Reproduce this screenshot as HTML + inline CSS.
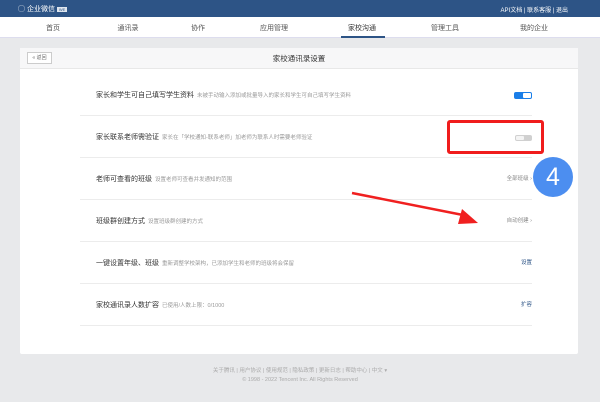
<!DOCTYPE html>
<html><head><meta charset="utf-8"><style>
*{margin:0;padding:0;box-sizing:border-box}
body{width:600px;height:402px;background:#e8e9eb;font-family:"Liberation Sans","Noto Sans CJK SC",sans-serif;position:relative;overflow:hidden}
.top{position:absolute;left:0;top:0;width:600px;height:17px;background:#2d5486;color:#fff;font-size:7px}
.nav{position:absolute;left:0;top:17px;width:600px;height:21px;background:#fff;font-size:7px;color:#555;border-bottom:1px solid #dde}
.nav span{position:absolute;top:6px;transform:translateX(-50%)}
.card{position:absolute;left:20px;top:48px;width:558px;height:306px;background:#fff;border-radius:2px}
.hdr{position:absolute;left:0;top:0;width:558px;height:21px;background:#f7f7f8;border-bottom:1px solid #e8e8e8}
.row{position:absolute;left:60px;width:452px;border-bottom:1px solid #ececec;height:42px}
.t{position:absolute;left:16px;top:16px;font-size:7px;color:#333;white-space:nowrap}
.t small{font-size:5.5px;color:#999;margin-left:3px}
.r{position:absolute;right:0;top:16px;font-size:5.5px;color:#888}
.foot{position:absolute;left:0;width:600px;text-align:center;color:#aaa;font-size:5.5px}
</style></head><body>
<div class="top">
<span style="position:absolute;left:18px;top:4px;font-size:7px">◯ 企业微信 <span style="background:#dfe6ee;color:#2d5486;font-size:4px;padding:0 2px">WE</span></span>
<span style="position:absolute;right:32px;top:5px;font-size:6px">API文档 | 联系客服 | 退出</span>
</div>
<div class="nav">
<span style="left:53px">首页</span><span style="left:128px">通讯录</span><span style="left:198px">协作</span><span style="left:274px">应用管理</span><span style="left:362px;color:#333">家校沟通</span><span style="left:445px">管理工具</span><span style="left:534px">我的企业</span>
<div style="position:absolute;left:341px;top:19px;width:44px;height:2px;background:#2d5486"></div>
</div>
<div class="card">
<div class="hdr">
<div style="position:absolute;left:7px;top:4px;width:25px;height:12px;border:1px solid #ccc;background:#fff;font-size:5px;color:#666;text-align:center;line-height:10px">« 返回</div>
<div style="position:absolute;left:0;width:558px;top:5px;text-align:center;font-size:7.5px;color:#333">家校通讯录设置</div>
</div>
<div class="row" style="top:26px"><div class="t">家长和学生可自己填写学生资料<small>未被手动输入添加或批量导入的家长和学生可自己填写学生资料</small></div>
<div style="position:absolute;right:0;top:18px;width:18px;height:7px;border-radius:2px;background:#1a7ee8"><div style="position:absolute;right:1px;top:1px;width:8px;height:5px;background:#fff;border-radius:1px"></div></div></div>
<div class="row" style="top:68px"><div class="t">家长联系老师需验证<small>家长在「学校通知-联系老师」加老师为联系人时需要老师验证</small></div>
<div style="position:absolute;right:0;top:19px;width:17px;height:6px;border-radius:2px;background:#d0d0d0"><div style="position:absolute;left:1px;top:1px;width:8px;height:4px;background:#f4f4f4;border-radius:1px"></div></div></div>
<div class="row" style="top:110px"><div class="t">老师可查看的班级<small>设置老师可查看并发通知的范围</small></div><div class="r">全部班级 ›</div></div>
<div class="row" style="top:152px"><div class="t">班级群创建方式<small>设置班级群创建的方式</small></div><div class="r">自动创建 ›</div></div>
<div class="row" style="top:194px"><div class="t">一键设置年级、班级<small>重新调整学校架构，已添加学生和老师的班级将会保留</small></div><div class="r" style="color:#2d5486">设置</div></div>
<div class="row" style="top:236px"><div class="t">家校通讯录人数扩容<small>已使用/人数上限：0/1000</small></div><div class="r" style="color:#2d5486">扩容</div></div>
</div>
<div class="foot" style="top:366px">关于腾讯 | 用户协议 | 使用规范 | 隐私政策 | 更新日志 | 帮助中心 | 中文 ▾</div>
<div class="foot" style="top:377px">© 1998 - 2022 Tencent Inc. All Rights Reserved</div>
<div style="position:absolute;left:447px;top:120px;width:97px;height:34px;border:3px solid #f01c1c;border-radius:3px"></div>
<div style="position:absolute;left:533px;top:157px;width:40px;height:40px;border-radius:50%;background:#4c8ef0;color:#fff;font-size:25px;text-align:center;line-height:40px">4</div>
<svg style="position:absolute;left:0;top:0" width="600" height="402"><path d="M352 193 L468 216" stroke="#f02020" stroke-width="2.5"/><path d="M478 223 L462 209 L458 224 Z" fill="#f02020"/></svg>
</body></html>
